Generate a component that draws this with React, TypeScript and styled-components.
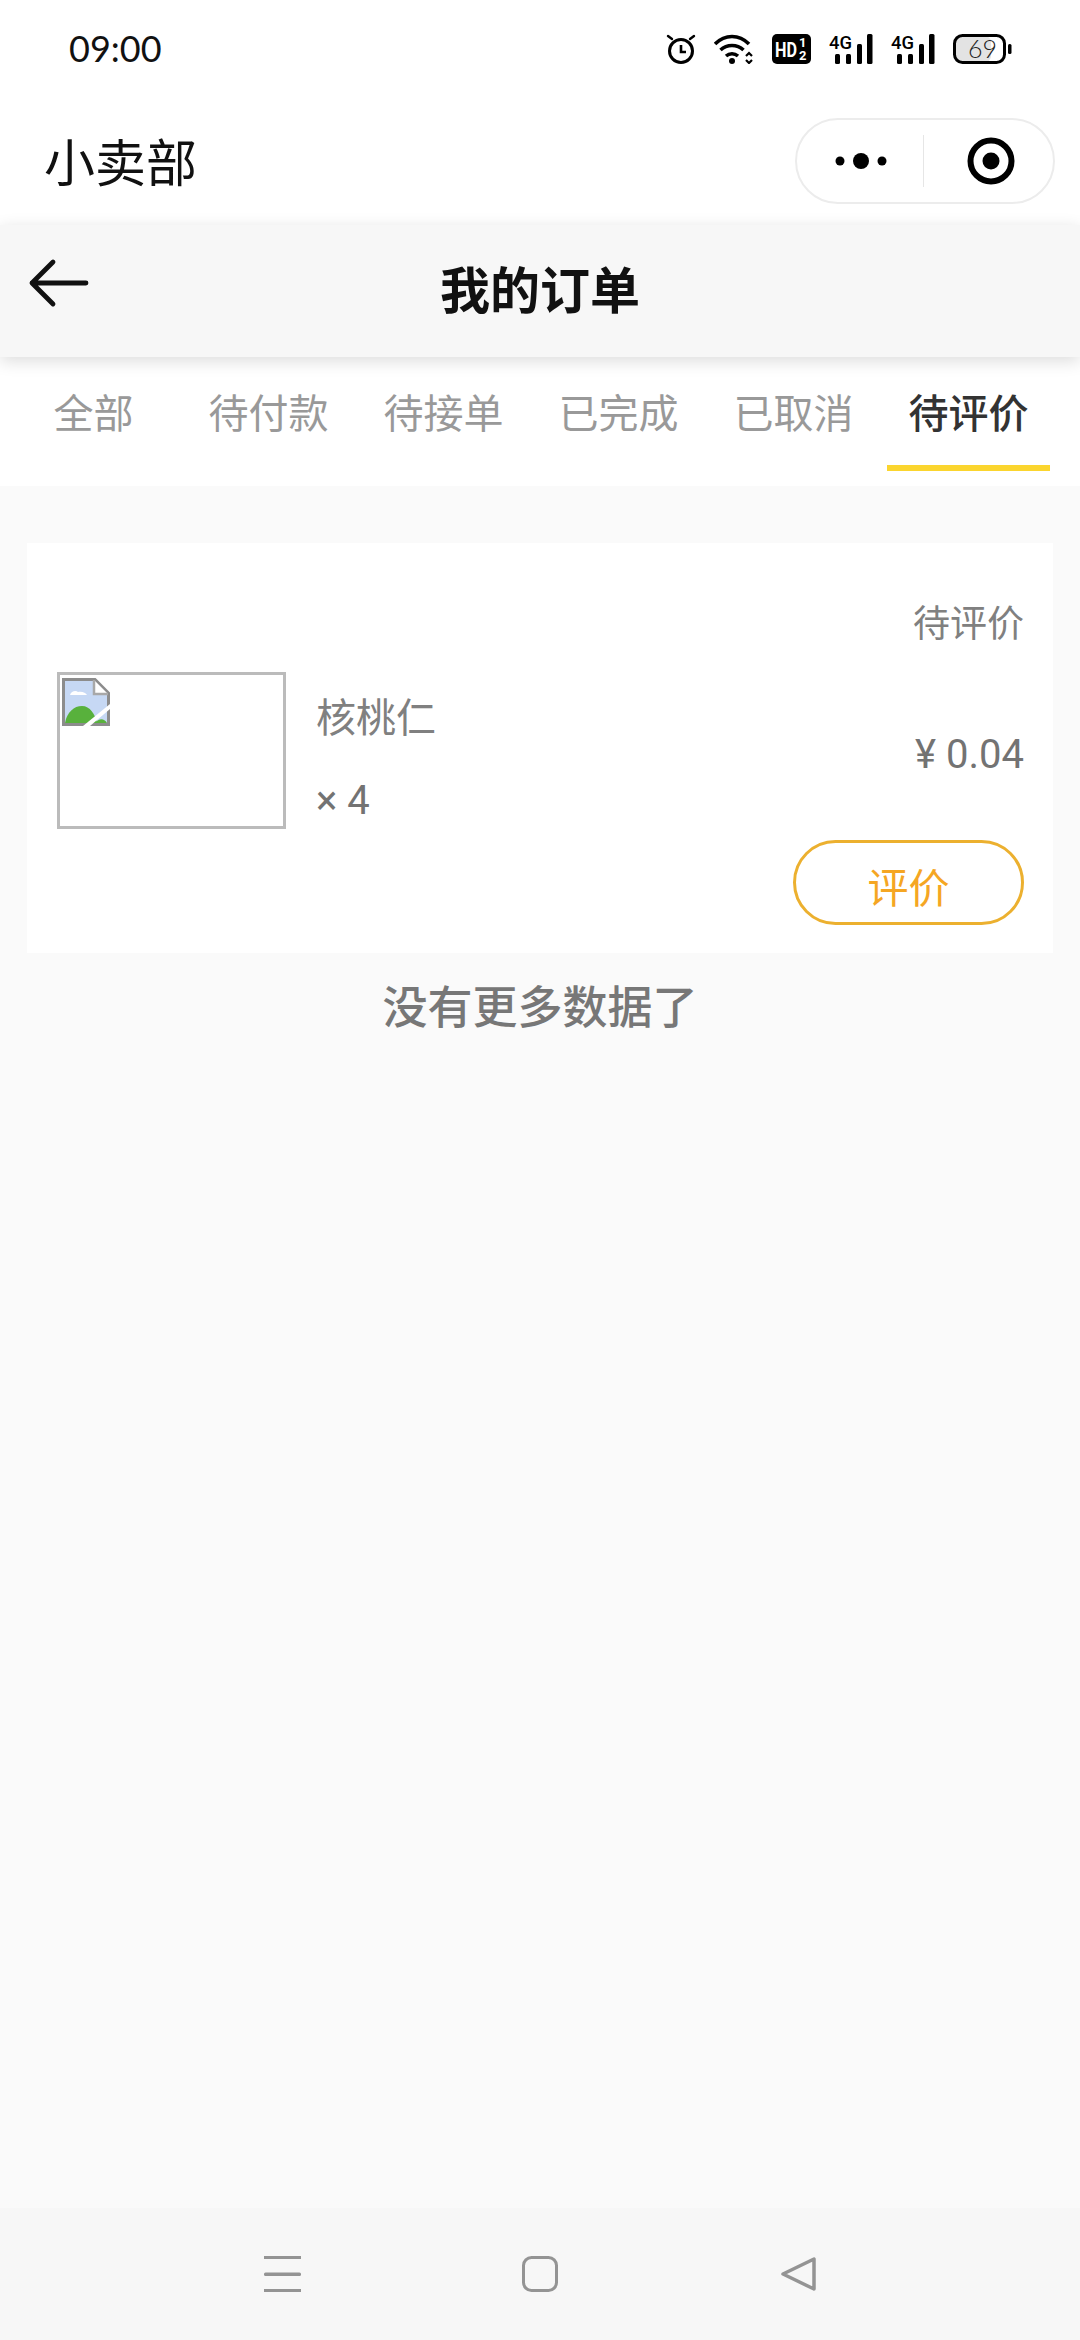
import styled, { createGlobalStyle } from "styled-components"

const GlobalStyle = createGlobalStyle`
  html, body {
    margin: 0;
    padding: 0;
    background: #fafafa;
  }
  * {
    box-sizing: border-box;
  }
`

const cjk = `"Noto Sans CJK SC", "Noto Sans", sans-serif`
const latin = `Roboto, "Noto Sans CJK SC", sans-serif`

const Page = styled.div`
  width: 1080px;
  height: 2340px;
  display: flex;
  flex-direction: column;
  background: #fafafa;
  font-family: ${cjk};
  overflow: hidden;
`

const StatusBar = styled.div`
  height: 97px;
  background: #fff;
  display: flex;
  align-items: center;
  padding: 0 68px 0 69px;
  justify-content: space-between;
`

const Clock = styled.span`
  font-family: Lato, sans-serif;
  font-size: 36px;
  line-height: 44px;
  margin-top: -2px;
  color: #111;
`

const StatusIcons = styled.div`
  display: flex;
  align-items: center;
  gap: 18px;
  height: 30px;
`

const AppBar = styled.div`
  height: 128px;
  background: #fff;
  display: flex;
  align-items: center;
  justify-content: space-between;
  padding: 0 25px 3px 44px;
`

const AppName = styled.span`
  font-size: 51px;
  line-height: 60px;
  color: #111;
`

const Capsule = styled.div`
  width: 260px;
  height: 86px;
  margin-top: 3px;
  border: 2px solid #ececec;
  border-radius: 43px;
  display: flex;
  align-items: center;
`

const CapsuleSide = styled.div<{ $shift?: number }>`
  flex: 1;
  display: flex;
  justify-content: center;
  align-items: center;
  padding-left: ${(p) => p.$shift ?? 0}px;
`

const CapsuleLine = styled.div`
  width: 1px;
  height: 52px;
  background: #e6e6e6;
`

const PageHeader = styled.div`
  height: 132px;
  background: #f7f7f7;
  box-shadow: 0 4px 16px rgba(0, 0, 0, 0.14);
  position: relative;
  z-index: 1;
  display: grid;
  grid-template-columns: 1fr auto 1fr;
  align-items: center;
  padding-left: 28px;
`

const BackIcon = styled.svg`
  display: block;
  margin-bottom: 16px;
`

const PageTitle = styled.h1`
  margin: 0 0 8px -28px;
  font-size: 50px;
  line-height: 60px;
  font-weight: 600;
  color: #111;
`

const Tabs = styled.div`
  height: 129px;
  background: #fff;
  display: grid;
  grid-template-columns: repeat(6, 175px);
  padding: 0 6px;
  align-items: start;
`

const Tab = styled.div<{ $active?: boolean }>`
  height: 114px;
  margin: 0 6px;
  display: flex;
  align-items: center;
  justify-content: center;
  font-size: 40px;
  color: ${(p) => (p.$active ? "#333" : "#999")};
  font-weight: ${(p) => (p.$active ? 500 : 400)};
  border-bottom: 6px solid ${(p) => (p.$active ? "#fbd52e" : "transparent")};
`

const Content = styled.div`
  flex: 1;
  padding: 57px 27px 0;
`

const Card = styled.div`
  height: 410px;
  background: #fff;
  padding: 50px 29px 28px 30px;
  display: flex;
  flex-direction: column;
`

const OrderStatus = styled.div`
  align-self: flex-end;
  font-size: 37px;
  line-height: 56px;
  color: #808080;
  margin-bottom: 23px;
`

const ItemRow = styled.div`
  display: flex;
  height: 156px;
`

const Thumb = styled.div`
  width: 229px;
  height: 157px;
  border: 3px solid #bbb;
  padding: 3px 2px;
`

const ItemInfo = styled.div`
  margin-left: 30px;
  padding-top: 18px;
  display: flex;
  flex-direction: column;
  gap: 36px;
`

const ItemName = styled.div`
  font-size: 40px;
  line-height: 50px;
  color: #808080;
`

const ItemCount = styled.div`
  font-family: ${latin};
  font-size: 40px;
  line-height: 50px;
  color: #737373;
`

const Price = styled.div`
  margin-left: auto;
  padding-top: 10px;
  align-self: center;
  font-family: ${latin};
  font-size: 40px;
  line-height: 50px;
  color: #737373;
`

const ReviewButton = styled.button`
  align-self: flex-end;
  margin-top: 12px;
  width: 231px;
  height: 85px;
  padding: 5px 0 0;
  background: #fff;
  border: 3px solid #ecb02f;
  border-radius: 43px;
  font-family: ${cjk};
  font-size: 41px;
  color: #f5a623;
`

const NoMore = styled.div`
  padding-top: 27px;
  text-align: center;
  font-size: 45px;
  line-height: 50px;
  font-weight: 500;
  color: #777;
`

const NavBar = styled.div`
  height: 132px;
  background: #f7f7f7;
  display: grid;
  grid-template-columns: repeat(3, 258px);
  justify-content: center;
  justify-items: center;
  align-items: center;
`

function AlarmIcon() {
  return (
    <svg width="30" height="30" viewBox="0 0 30 30" fill="none" stroke="#000" strokeWidth="3" strokeLinecap="round">
      <circle cx="15" cy="17" r="11.5" />
      <path d="M15 11v7h5" strokeWidth="2.6" strokeLinecap="butt" />
      <path d="M2 2l4 3M28 2l-4 3" strokeWidth="2.4" />
    </svg>
  )
}

function WifiIcon() {
  return (
    <svg width="40" height="30" viewBox="0 0 40 30" fill="none" stroke="#000" strokeWidth="3.6">
      <path d="M1 10C11 0 25 0 35 10" />
      <path d="M6.500 16C13 10 23 10 29.500 16" />
      <path d="M12 22C15.500 19 20.500 19 24 22" />
      <circle cx="18" cy="27" r="3" fill="#000" stroke="none" />
      <path d="M32 22l3-3 3 3M32 26l3 3 3-3" strokeWidth="2.200" />
    </svg>
  )
}

function HdIcon() {
  return (
    <svg width="39" height="30" viewBox="0 0 39 30">
      <rect width="39" height="30" rx="5" fill="#000" />
      <text x="3" y="23" fontFamily="Roboto, sans-serif" fontSize="21" fontWeight="700" fill="#fff" textLength="22" lengthAdjust="spacingAndGlyphs">HD</text>
      <text x="27" y="13" fontFamily="Roboto, sans-serif" fontSize="13" fontWeight="700" fill="#fff">1</text>
      <text x="27" y="26" fontFamily="Roboto, sans-serif" fontSize="13" fontWeight="700" fill="#fff">2</text>
    </svg>
  )
}

function SignalIcon() {
  return (
    <svg width="44" height="38" viewBox="0 -4 44 38">
      <text x="0" y="15" fontFamily="Roboto, sans-serif" fontSize="18" fontWeight="500" fill="#000" textLength="23" lengthAdjust="spacingAndGlyphs">4G</text>
      <rect x="6" y="20" width="5" height="10" rx="1.500" />
      <rect x="17" y="20" width="5" height="10" rx="1.500" />
      <rect x="28" y="10" width="5" height="20" rx="1.500" />
      <rect x="38" y="0" width="5.500" height="30" rx="1.500" />
    </svg>
  )
}

function BatteryIcon() {
  return (
    <svg width="59" height="38" viewBox="0 -4 59 38">
      <rect x="2" y="2" width="36" height="26" rx="6" fill="#e3e3e3" />
      <rect x="1.500" y="1.500" width="50" height="27" rx="8" fill="none" stroke="#000" strokeWidth="3" />
      <rect x="55" y="10" width="3.500" height="10" rx="1.500" />
      <text x="15" y="24" fontFamily="Lato, sans-serif" fontSize="25" fontWeight="300" fill="#222">69</text>
    </svg>
  )
}

function BrokenImage() {
  return (
    <svg width="48" height="48" viewBox="0 0 48 48" style={{ display: "block" }}>
      <path d="M1.500 1.500H33L46.500 15V46.500H1.500Z" fill="#c6d8f4" stroke="#8c8c8c" strokeWidth="3" />
      <path d="M32 2V16H46" fill="#fff" stroke="#a8a8a8" strokeWidth="2.500" />
      <path d="M8 17c1-4 6-5 8-3 4-1 8 1 9 3Z" fill="#fff" />
      <path d="M3 45C5 34 12 28 20 28C28 28 33 36 35 45Z" fill="#58b13c" />
      <path d="M33 45C37 40 42 40 45 45Z" fill="#58b13c" />
      <path d="M21 48L48 26V31L28 48Z" fill="#fff" />
    </svg>
  )
}

const tabNames = ["全部", "待付款", "待接单", "已完成", "已取消", "待评价"]

export default function App() {
  return (
    <Page>
      <GlobalStyle />
      <StatusBar>
        <Clock>09:00</Clock>
        <StatusIcons>
          <AlarmIcon />
          <WifiIcon />
          <HdIcon />
          <SignalIcon />
          <SignalIcon />
          <BatteryIcon />
        </StatusIcons>
      </StatusBar>
      <AppBar>
        <AppName>小卖部</AppName>
        <Capsule>
          <CapsuleSide $shift={2}>
            <svg width="52" height="18" viewBox="0 0 52 18">
              <circle cx="5" cy="9" r="4.500" />
              <circle cx="26" cy="9" r="8" />
              <circle cx="47" cy="9" r="4.500" />
            </svg>
          </CapsuleSide>
          <CapsuleLine />
          <CapsuleSide $shift={6}>
            <svg width="48" height="48" viewBox="0 0 48 48">
              <circle cx="24" cy="24" r="20.500" fill="none" stroke="#000" strokeWidth="6" />
              <circle cx="24" cy="24" r="8.500" />
            </svg>
          </CapsuleSide>
        </Capsule>
      </AppBar>
      <PageHeader>
        <BackIcon width="62" height="50" viewBox="0 0 62 50" fill="none" stroke="#111" strokeWidth="4.800" strokeLinecap="round" strokeLinejoin="round">
          <path d="M58 25H4M25 4L4 25L25 46" />
        </BackIcon>
        <PageTitle>我的订单</PageTitle>
        <span />
      </PageHeader>
      <Tabs>
        {tabNames.map((name, index) => (
          <Tab key={name} $active={index === 5}>
            {name}
          </Tab>
        ))}
      </Tabs>
      <Content>
        <Card>
          <OrderStatus>待评价</OrderStatus>
          <ItemRow>
            <Thumb>
              <BrokenImage />
            </Thumb>
            <ItemInfo>
              <ItemName>核桃仁</ItemName>
              <ItemCount>× 4</ItemCount>
            </ItemInfo>
            <Price>¥ 0.04</Price>
          </ItemRow>
          <ReviewButton>评价</ReviewButton>
        </Card>
        <NoMore>没有更多数据了</NoMore>
      </Content>
      <NavBar>
        <svg width="37" height="36" viewBox="0 0 37 36" fill="#949494">
          <rect x="0" y="0" width="37" height="3" />
          <rect x="0" y="16.500" width="37" height="3.500" rx="1.500" />
          <rect x="0" y="33" width="37" height="3" />
        </svg>
        <svg width="36" height="36" viewBox="0 0 36 36" fill="none" stroke="#949494" strokeWidth="3">
          <rect x="1.500" y="1.500" width="33" height="33" rx="8" />
        </svg>
        <svg width="37" height="36" viewBox="0 0 37 36" fill="none" stroke="#949494" strokeWidth="3.500" strokeLinejoin="round">
          <path d="M34 3V33L3 18Z" />
        </svg>
      </NavBar>
    </Page>
  )
}
